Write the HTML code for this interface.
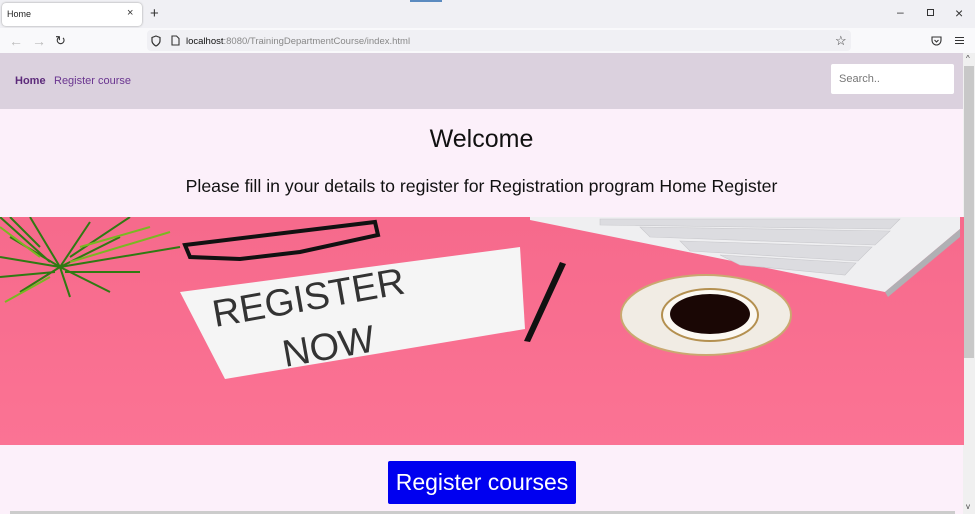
<!DOCTYPE html>
<html><head><style>
*{margin:0;padding:0;box-sizing:border-box}
body{width:975px;height:514px;overflow:hidden;font-family:"Liberation Sans",sans-serif;background:#fcf0fa;position:relative}
.abs{position:absolute}
</style></head><body>
<div class="abs" style="left:0;top:0;width:975px;height:28px;background:#f0f0f4"></div>
<div class="abs" style="left:410px;top:0;width:32px;height:2px;background:#5b8bc0"></div>
<div class="abs" style="left:2px;top:3px;width:140px;height:23px;background:#fff;border-radius:4px;box-shadow:0 0 2px #999"></div>
<div class="abs" style="left:7px;top:9px;font-size:9px;color:#222">Home</div>
<div class="abs" style="left:127px;top:7px;font-size:11px;color:#333">×</div>
<div class="abs" style="left:150px;top:5px;font-size:15px;color:#333">+</div>
<div class="abs" style="left:897px;top:5px;font-size:12px;color:#333">–</div>
<div class="abs" style="left:927px;top:9px;width:7px;height:7px;border:1px solid #333"></div>
<div class="abs" style="left:955px;top:5px;font-size:14px;color:#333">×</div>
<div class="abs" style="left:0;top:28px;width:975px;height:25px;background:#f9f9fb"></div>
<div class="abs" style="left:9px;top:33px;font-size:14px;color:#bbb">←</div>
<div class="abs" style="left:32px;top:33px;font-size:14px;color:#bbb">→</div>
<div class="abs" style="left:55px;top:33px;font-size:13px;color:#333">↻</div>
<div class="abs" style="left:147px;top:30px;width:704px;height:21px;background:#f0f0f4;border-radius:4px"></div>
<svg class="abs" style="left:151px;top:35px" width="10" height="12" viewBox="0 0 10 12"><path d="M5 1 L9 2.5 V6 C9 9 5 11 5 11 C5 11 1 9 1 6 V2.5Z" fill="none" stroke="#333" stroke-width="1.2"/></svg>
<svg class="abs" style="left:171px;top:35px" width="9" height="11" viewBox="0 0 9 11"><path d="M1 1 H5.5 L8 3.5 V10 H1Z" fill="none" stroke="#333" stroke-width="1.1"/></svg>
<div class="abs" style="left:186px;top:36px;font-size:9.5px;color:#888"><span style="color:#111">localhost</span>:8080/TrainingDepartmentCourse/index.html</div>
<div class="abs" style="left:835px;top:33px;font-size:13px;color:#333">☆</div>
<svg class="abs" style="left:931px;top:36px" width="11" height="10" viewBox="0 0 11 10"><path d="M1 1 H10 V4 C10 7 8 9 5.5 9 C3 9 1 7 1 4Z M3.5 4 L5.5 6 L7.5 4" fill="none" stroke="#333" stroke-width="1.1"/></svg>
<div class="abs" style="left:955px;top:37px;width:9px;height:7px;border-top:1px solid #333;border-bottom:1px solid #333"></div>
<div class="abs" style="left:955px;top:40px;width:9px;height:1px;background:#333"></div>
<div class="abs" style="left:0;top:53px;width:963px;height:56px;background:#dbd1de"></div>
<div class="abs" style="left:15px;top:75px;font-size:11px;font-weight:bold;color:#5c2a7a">Home</div>
<div class="abs" style="left:54px;top:75px;font-size:11px;color:#6a3590">Register course</div>
<div class="abs" style="left:831px;top:64px;width:123px;height:30px;background:#fff;border-radius:2px"></div>
<div class="abs" style="left:839px;top:73px;font-size:11px;color:#777">Search..</div>
<div class="abs" style="left:963px;top:53px;width:12px;height:461px;background:#f0f0f0"></div>
<div class="abs" style="left:964px;top:66px;width:10px;height:292px;background:#c8c8c8"></div>
<div class="abs" style="left:966px;top:54px;font-size:8px;color:#444">^</div>
<div class="abs" style="left:966px;top:502px;font-size:8px;color:#444">v</div>
<div class="abs" style="left:0;top:125px;width:963px;text-align:center;font-size:25px;color:#111">Welcome</div>
<div class="abs" style="left:0;top:176px;width:963px;text-align:center;font-size:17.7px;color:#111">Please fill in your details to register for Registration program Home Register</div>
<svg class="abs" style="left:0;top:217px" width="964" height="228" viewBox="0 0 964 228">
<defs><linearGradient id="g" x1="0" y1="0" x2="0" y2="1"><stop offset="0" stop-color="#f66a8c"/><stop offset="1" stop-color="#fb7394"/></linearGradient></defs>
<rect width="964" height="228" fill="url(#g)"/>
<path d="M530 0 H960 V12 L885 75 L530 3Z" fill="#efeff1"/>
<path d="M885 75 L960 12 V20 L888 80Z" fill="#b0b0b4"/>
<g fill="#dcdce0" stroke="#c8c8cc" stroke-width="0.6">
<path d="M600 2 L900 2 L890 12 L600 8Z"/>
<path d="M640 10 L890 14 L875 28 L650 20Z"/>
<path d="M680 24 L872 30 L858 44 L690 34Z"/>
<path d="M720 38 L856 46 L845 58 L740 48Z"/>
</g>
<g stroke="#2f7a12" stroke-width="2" fill="none"><path d="M60 50 L10 20 M60 50 L30 0 M60 50 L90 5 M60 50 L120 20 M60 50 L180 30 M60 50 L110 75 M60 50 L20 75 M60 50 L0 40 M60 50 L70 80 M50 45 L0 0 M70 40 L130 0 M55 55 L0 60 M65 55 L140 55 M40 30 L10 0"/><path d="M40 40 L0 10 M80 30 L150 10 M50 60 L5 85 M70 45 L170 15" stroke="#7ab822"/></g>
<path d="M185 28 L375 5 L378 18 L300 35 L240 42 L190 40Z" fill="none" stroke="#111" stroke-width="4"/>
<path d="M180 75 L520 30 L525 112 L225 162Z" fill="#f5f5f5"/>
<text x="215" y="110" font-family="Liberation Sans" font-size="38" fill="#333" transform="rotate(-10 215 110)">REGISTER</text>
<text x="285" y="150" font-family="Liberation Sans" font-size="38" fill="#333" transform="rotate(-10 285 150)">NOW</text>
<path d="M560 45 L566 47 L530 125 L524 124Z" fill="#111"/>
<ellipse cx="706" cy="98" rx="85" ry="40" fill="#f1ece4" stroke="#caa870" stroke-width="2"/>
<ellipse cx="710" cy="98" rx="48" ry="26" fill="#fbf8f2" stroke="#b49050" stroke-width="2"/>
<ellipse cx="710" cy="97" rx="40" ry="20" fill="#1a0705"/>
<rect x="630" y="90" width="30" height="8" fill="#f1ece4"/>
</svg>
<div class="abs" style="left:388px;top:461px;width:188px;height:43px;background:#0000f0;border-radius:2px;color:#fff;font-size:23px;text-align:center;line-height:43px">Register courses</div>
<div class="abs" style="left:10px;top:511px;width:945px;height:3px;background:#ccc"></div>
</body></html>
